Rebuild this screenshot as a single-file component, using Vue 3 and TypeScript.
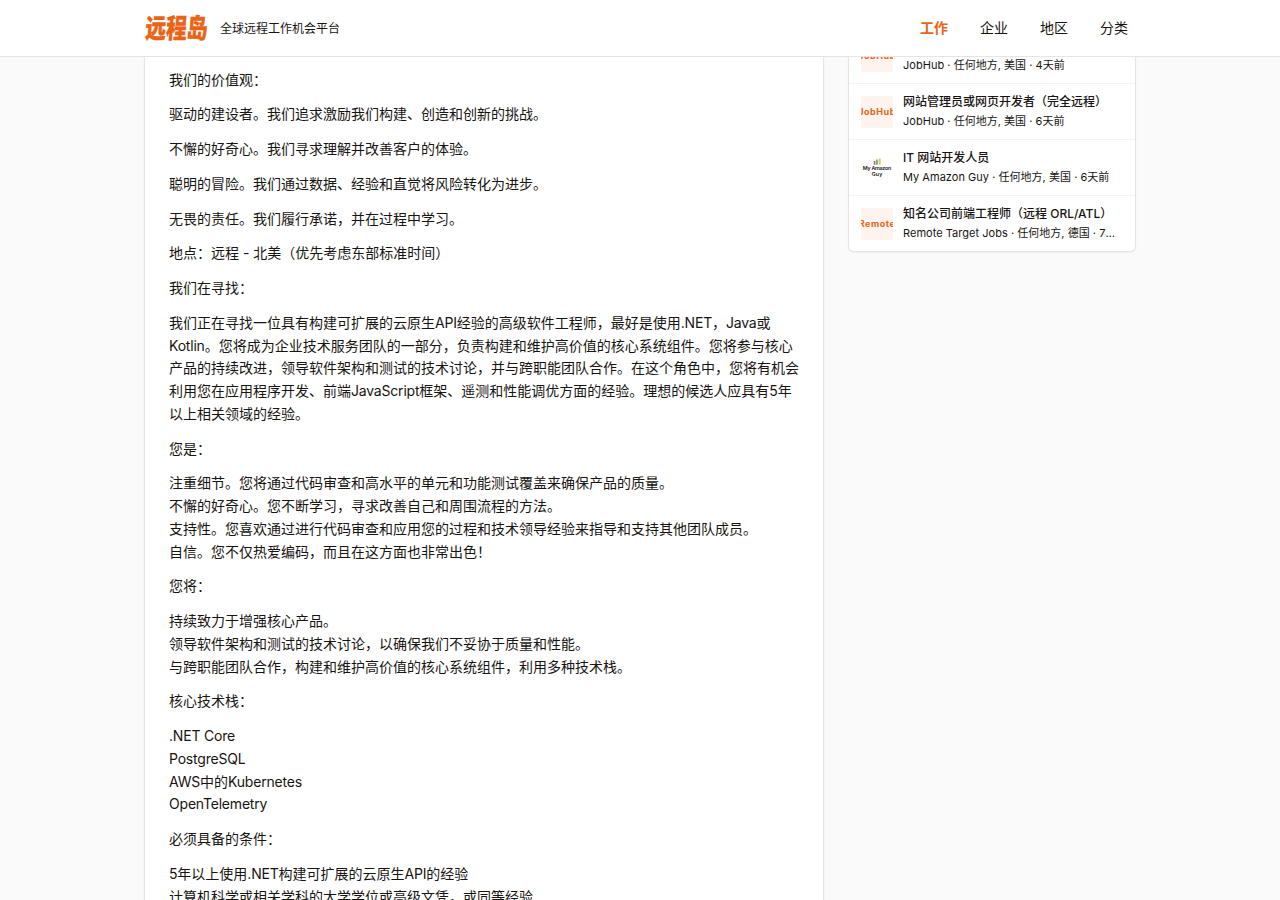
<script setup lang="ts">
interface Job {
  title: string
  meta: string
  logo: string
  image?: boolean
}

const nav: string[] = ['工作', '企业', '地区', '分类']

const jobs: Job[] = [
  { title: '网站开发人员', meta: 'JobHub · 任何地方, 美国 · 4天前', logo: 'JobHub' },
  { title: '网站管理员或网页开发者（完全远程）', meta: 'JobHub · 任何地方, 美国 · 6天前', logo: 'JobHub' },
  { title: 'IT 网站开发人员', meta: 'My Amazon Guy · 任何地方, 美国 · 6天前', logo: '', image: true },
  { title: '知名公司前端工程师（远程 ORL/ATL）', meta: 'Remote Target Jobs · 任何地方, 德国 · 7天前', logo: 'Remote' },
]

const paragraphs: string[][] = [
  ['我们的价值观：'],
  ['驱动的建设者。我们追求激励我们构建、创造和创新的挑战。'],
  ['不懈的好奇心。我们寻求理解并改善客户的体验。'],
  ['聪明的冒险。我们通过数据、经验和直觉将风险转化为进步。'],
  ['无畏的责任。我们履行承诺，并在过程中学习。'],
  ['地点：远程 - 北美（优先考虑东部标准时间）'],
  ['我们在寻找：'],
  [
    '我们正在寻找一位具有构建可扩展的云原生API经验的高级软件工程师，最好是使用.NET，Java或',
    'Kotlin。您将成为企业技术服务团队的一部分，负责构建和维护高价值的核心系统组件。您将参与核心',
    '产品的持续改进，领导软件架构和测试的技术讨论，并与跨职能团队合作。在这个角色中，您将有机会',
    '利用您在应用程序开发、前端JavaScript框架、遥测和性能调优方面的经验。理想的候选人应具有5年',
    '以上相关领域的经验。',
  ],
  ['您是：'],
  [
    '注重细节。您将通过代码审查和高水平的单元和功能测试覆盖来确保产品的质量。',
    '不懈的好奇心。您不断学习，寻求改善自己和周围流程的方法。',
    '支持性。您喜欢通过进行代码审查和应用您的过程和技术领导经验来指导和支持其他团队成员。',
    '自信。您不仅热爱编码，而且在这方面也非常出色！',
  ],
  ['您将：'],
  [
    '持续致力于增强核心产品。',
    '领导软件架构和测试的技术讨论，以确保我们不妥协于质量和性能。',
    '与跨职能团队合作，构建和维护高价值的核心系统组件，利用多种技术栈。',
  ],
  ['核心技术栈：'],
  ['.NET Core', 'PostgreSQL', 'AWS中的Kubernetes', 'OpenTelemetry'],
  ['必须具备的条件：'],
  ['5年以上使用.NET构建可扩展的云原生API的经验', '计算机科学或相关学科的大学学位或高级文凭，或同等经验'],
]

// Latin runs are set slightly tighter than the Chinese text around them.
const runs = (line: string): string[] => line.split(/([A-Za-z0-9.][A-Za-z0-9. ]*)/).filter(Boolean)
const isLatin = (run: string): boolean => /^[A-Za-z0-9.]/.test(run)
</script>

<template>
  <div class="page">
    <header class="header">
      <div class="inner">
        <span class="brand"><span class="brand-text">远程岛</span></span>
        <span class="tagline">全球远程工作机会平台</span>
        <nav class="nav">
          <a v-for="(item, i) in nav" :key="item" :class="{ active: i === 0 }">{{ item }}</a>
        </nav>
      </div>
    </header>
    <div class="viewport">
      <main class="card article">
        <p v-for="(lines, i) in paragraphs" :key="i">
          <span v-for="line in lines" :key="line" class="line"><span v-for="(run, k) in runs(line)" :key="k" :class="{ latin: isLatin(run) }">{{ run }}</span></span>
        </p>
      </main>
      <aside class="card jobs">
        <div v-for="(job, i) in jobs" :key="i" class="job">
          <div v-if="job.image" class="logo plain">
            <svg width="32" height="32" viewBox="0 0 32 32">
              <rect x="12.7" y="9" width="1.7" height="3.7" fill="#e8506a" />
              <rect x="15.1" y="7.5" width="1.7" height="5.2" fill="#4fa3b5" />
              <rect x="17.7" y="6.6" width="2" height="6.1" fill="#d9cf45" />
              <text x="16" y="18.4" text-anchor="middle" textLength="28.5">My Amazon</text>
              <text x="16" y="23.6" text-anchor="middle" textLength="10.5">Guy</text>
            </svg>
          </div>
          <div v-else class="logo"><span>{{ job.logo }}</span></div>
          <div class="info">
            <div class="title">{{ job.title }}</div>
            <div class="meta">{{ job.meta }}</div>
          </div>
        </div>
      </aside>
    </div>
  </div>
</template>

<style>
body {
  margin: 0;
  background: #fafafa;
  overflow: hidden;
}
</style>

<style scoped>
.page {
  height: 900px;
  display: flex;
  flex-direction: column;
  overflow: hidden;
  background: #fafafa;
  color: #171412;
  font-family: Inter, 'Noto Sans CJK SC', sans-serif;
  font-size: 14px;
}
.header {
  flex: none;
  height: 56px;
  background: #fff;
  border-bottom: 1px solid #e5e5e5;
}
.inner {
  width: 992px;
  height: 54px;
  margin: 0 auto;
  display: flex;
  align-items: center;
}
.brand {
  flex: none;
  width: 76px;
  line-height: 54px;
  white-space: nowrap;
}
.brand-text {
  display: inline-block;
  font-family: 'Noto Sans CJK SC', sans-serif;
  font-size: 26px;
  font-weight: 900;
  color: #ea6416;
  -webkit-text-stroke: 0.4px #ea6416;
  transform-origin: left center;
  transform: translate(1.5px, 2.5px) scale(0.8, 1.03) skewX(-5deg);
}
.tagline {
  font-size: 12px;
}
.nav {
  margin-left: auto;
  margin-right: 8px;
  display: flex;
  gap: 32px;
}
.active {
  color: #ea6416;
  font-weight: 700;
}
.viewport {
  flex: 1;
  min-height: 0;
  width: 992px;
  margin: 0 auto;
  display: flex;
  align-items: flex-start;
  gap: 24px;
}
.card {
  box-sizing: border-box;
  background: #fff;
  border: 1px solid #e5e5e5;
  border-top: 0;
  box-shadow: 0 1px 2px rgba(0, 0, 0, 0.06);
}
.article {
  width: 680px;
  height: 860px;
  padding: 11.5px 0 0 24px;
}
.article p {
  margin: 0 0 12px;
  line-height: 22.75px;
}
.line {
  display: block;
  white-space: nowrap;
}
.latin {
  letter-spacing: -0.2px;
}
.jobs {
  width: 288px;
  height: 195px;
  display: flex;
  flex-direction: column;
  justify-content: flex-end;
  overflow: hidden;
  border-radius: 0 0 6px 6px;
}
.job {
  flex: none;
  box-sizing: border-box;
  height: 56px;
  padding: 0 12px;
  display: flex;
  align-items: center;
  gap: 10px;
  border-top: 1px solid #f2f2f2;
}
.logo {
  flex: none;
  width: 32px;
  height: 32px;
  border-radius: 3px;
  background: #fff3ed;
  color: #ea6416;
  font-size: 9px;
  letter-spacing: 0.55px;
  font-weight: 700;
  display: flex;
  align-items: center;
  justify-content: center;
  overflow: hidden;
}
.plain {
  background: #fff;
}
.logo text {
  font-size: 5.3px;
  letter-spacing: 0;
  font-weight: 600;
  fill: #222;
}
.info {
  flex: 1;
  min-width: 0;
  margin-top: -2px;
}
.title,
.meta {
  white-space: nowrap;
  overflow: hidden;
  text-overflow: ellipsis;
}
.title {
  font-size: 12px;
  line-height: 20px;
  font-weight: 500;
}
.meta {
  font-size: 11px;
  line-height: 18px;
  letter-spacing: 0.03px;
}
</style>
